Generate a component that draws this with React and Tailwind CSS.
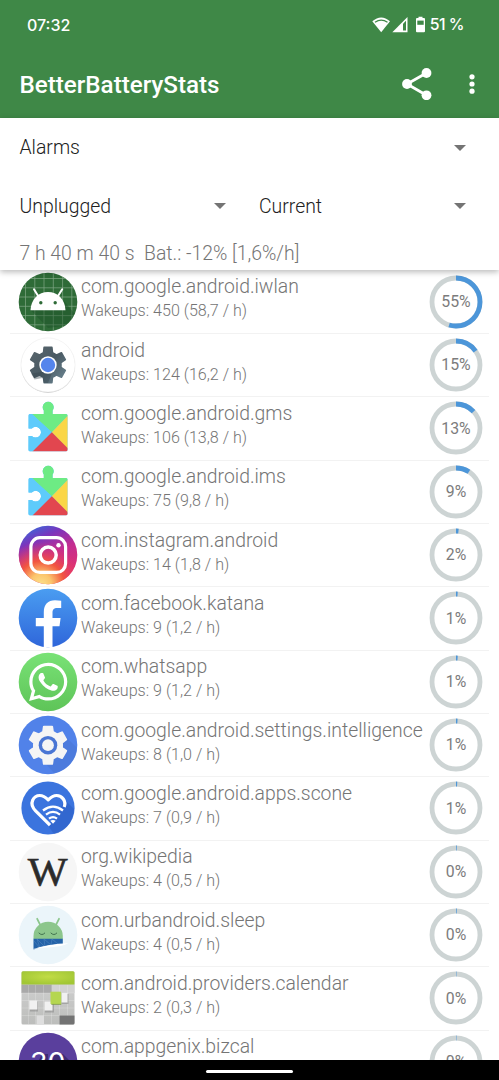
import { FaWhatsapp } from 'react-icons/fa6'

function gearPath(cx, cy, outer, inner, tipAngle, rootAngle) {
  const pts = []
  for (let i = 0; i < 6; i++) {
    const mid = i * 60 - 90
    const steps = [[-rootAngle, inner], [-tipAngle, outer], [tipAngle, outer], [rootAngle, inner]]
    for (const [off, r] of steps) {
      const a = ((mid + off) * Math.PI) / 180
      pts.push(`${(cx + r * Math.cos(a)).toFixed(2)} ${(cy + r * Math.sin(a)).toFixed(2)}`)
    }
  }
  return `M${pts.join('L')}Z`
}

function AndroidIcon() {
  const lines = [7.5, 16.8, 26, 35.3, 44.6, 53.8]
  return (
    <>
      <clipPath id="iwlan"><circle cx="30" cy="30" r="29.3" /></clipPath>
      <g clipPath="url(#iwlan)">
        <rect width="60" height="60" fill="#2e6b37" />
        <path d={lines.map((v) => `M${v} 0V60M0 ${v - 1}H60`).join('')} stroke="#82a987" strokeWidth=".7" />
        <path d="M12.7 38.3 30 56 60 52V46L46 29Z" fill="#1d5128" opacity=".45" />
      </g>
      <path d="m16 17.3 4 6.5M44.2 17.3l-4 6.5" stroke="#fff" strokeWidth="2" strokeLinecap="round" />
      <path d="M12.5 38.2C13 27 20.5 20 30 20s17 7 17.5 18.2Z" fill="#fff" />
      <circle cx="22.8" cy="30.8" r="1.7" fill="#2e6b37" />
      <circle cx="37.2" cy="30.8" r="1.7" fill="#2e6b37" />
    </>
  )
}

function SystemIcon() {
  return (
    <>
      <linearGradient id="sysgear" x1="0" y1="0" x2="1" y2="1">
        <stop offset="0" stopColor="#59666d" />
        <stop offset=".5" stopColor="#4a5a63" />
        <stop offset="1" stopColor="#6d8794" />
      </linearGradient>
      <circle cx="30" cy="30.9" r="27" fill="#c9c9c9" />
      <circle cx="30" cy="30" r="27.1" fill="#fff" stroke="#ececec" strokeWidth=".6" />
      <path d={gearPath(30, 30, 18.2, 13.2, 12.5, 20)} fill="url(#sysgear)" stroke="url(#sysgear)" strokeWidth="1.5" strokeLinejoin="round" />
      <path d="m24 37 10 1-4 10h-4l-1.500-5-8 1.500-3.500-6Z" fill="#34434b" opacity=".4" />
      <circle cx="30" cy="30" r="8.7" fill="#fff" />
      <circle cx="30" cy="30" r="7.2" fill="#5585ec" />
    </>
  )
}

function PlayServicesIcon({ id }) {
  const clip = `puzzle-${id}`
  return (
    <>
      <clipPath id={clip}>
        <path d="M12 15.9H25.8V12.5A5.5 5.5 0 1 1 34.6 12.5V15.9H48A1.5 1.5 0 0 1 49.5 17.4V51.7A1.5 1.5 0 0 1 48 53.2H12A1.5 1.5 0 0 1 10.5 51.7V38H13.8A5.4 5.4 0 1 0 13.8 30.4H10.5V17.4A1.5 1.5 0 0 1 12 15.9Z" />
      </clipPath>
      <g clipPath={`url(#${clip})`}>
        <rect width="60" height="60" fill="#5ecbfb" />
        <path d="M10.5 15.9V0H50V17.5L33.8 34.2 14 15.9Z" fill="#6deb84" />
        <path d="M10.5 13 33.8 34.2 14 54H10Z" fill="#5ecbfb" />
        <path d="M50 17.5V51L33.8 34.2Z" fill="#fad646" />
        <path d="M14.5 53.5 33.8 34.2 50 50.5V54H14Z" fill="#e2464f" />
      </g>
    </>
  )
}

function InstagramIcon() {
  return (
    <>
      <linearGradient id="igbase" x1=".25" y1="0" x2=".7" y2="1">
        <stop offset="0" stopColor="#3b66d8" />
        <stop offset=".22" stopColor="#7a35bd" />
        <stop offset=".5" stopColor="#c22d92" />
        <stop offset="1" stopColor="#e8336a" />
      </linearGradient>
      <radialGradient id="igwarm" cx=".38" cy="1" r=".72">
        <stop offset="0" stopColor="#fde08a" />
        <stop offset=".25" stopColor="#fbc56c" />
        <stop offset=".55" stopColor="#f2563f" />
        <stop offset="1" stopColor="#e0306e" stopOpacity="0" />
      </radialGradient>
      <circle cx="30" cy="30" r="29.3" fill="url(#igbase)" />
      <circle cx="30" cy="30" r="29.3" fill="url(#igwarm)" />
      <rect x="12.9" y="12.7" width="34.7" height="34.7" rx="9" fill="none" stroke="#fff" strokeWidth="3.2" />
      <circle cx="30.2" cy="30.1" r="8" fill="none" stroke="#fff" strokeWidth="3.5" />
      <circle cx="40.5" cy="20.2" r="2.2" fill="#fff" />
    </>
  )
}

function FacebookIcon() {
  return (
    <>
      <linearGradient id="fb" x1="0" y1="0" x2="0" y2="1">
        <stop offset="0" stopColor="#4a9df1" />
        <stop offset="1" stopColor="#2f66da" />
      </linearGradient>
      <circle cx="30" cy="30" r="29.3" fill="url(#fb)" />
      <path d="M25.8 59V38.2H17.8V29.9H25.8V24C25.8 16.5 30 12.3 37 12.3Q40 12.3 43.2 12.8V19.9H39.4C35.6 19.9 34.5 22 34.5 24.5V29.9H42.6L41.5 38.2H34.5V59Q30 59.6 25.8 59Z" fill="#fff" />
    </>
  )
}

function WhatsappIcon() {
  return (
    <>
      <linearGradient id="wa" x1="0" y1="0" x2="0" y2="1">
        <stop offset="0" stopColor="#79e276" />
        <stop offset="1" stopColor="#5ec458" />
      </linearGradient>
      <circle cx="30" cy="30" r="29.3" fill="url(#wa)" />
      <FaWhatsapp x="8.4" y="8" size="43.6" color="#fff" />
    </>
  )
}

function SettingsIcon() {
  return (
    <>
      <circle cx="30" cy="30" r="29.3" fill="#5182e9" />
      <path d="m46 20 13 13c0 6-3 12-7 16s-9 8-16 9L27 48Z" fill="#4a76d6" opacity=".6" />
      <path d={gearPath(30, 30.2, 19, 14.2, 12.5, 20)} fill="#f5f5f5" stroke="#f5f5f5" strokeWidth="2" strokeLinejoin="round" />
      <circle cx="30" cy="30.2" r="9.3" fill="#4a76d4" />
      <circle cx="30" cy="30.2" r="5.9" fill="#f5f5f5" />
    </>
  )
}

function SconeIcon() {
  return (
    <>
      <circle cx="30" cy="30" r="26.6" fill="#3b74de" />
      <path d="M47 22 56 31C55 44 47 54 36 56L31 49Z" fill="#2d5fc4" opacity=".6" />
      <g fill="none" stroke="#fff" strokeWidth="3.2">
        <path d="M32 47.2 17.6 32.8C10 25 16 17.5 21.8 17.5 25.5 17.5 28 19.6 30.2 21.8 32.4 19.6 35 17.5 38.6 17.5 44 17.5 48.500 23 46.2 29" strokeLinejoin="round" />
        <path d="M25 32.5Q35 24.8 45 32.5M28 36.6Q35 31.2 42 36.6M31 40.6Q35 37.7 39 40.6" strokeWidth="2.3" />
      </g>
      <path d="m32.3 42.8 2.7 3 2.7-3q-2.7-1.800-5.400 0Z" fill="#fff" />
    </>
  )
}

function WikipediaIcon() {
  return (
    <>
      <circle cx="30" cy="30" r="29.3" fill="#f6f6f6" />
      <text x="9.8" y="42.8" textLength="39.8" lengthAdjust="spacingAndGlyphs" fill="#2b2b2b" stroke="#2b2b2b" strokeWidth=".6" className="font-['Liberation_Serif',serif] text-[39px]">W</text>
    </>
  )
}

function SleepIcon() {
  return (
    <>
      <circle cx="30" cy="30" r="29.3" fill="#ebf5fa" />
      <path d="m19.2 13.8 3 6M41 13.8l-3 6" stroke="#8cc68c" strokeWidth="1.8" strokeLinecap="round" />
      <path d="M15.5 34V31a14.65 14.2 0 0 1 29.3 0V34Z" fill="#8cc68c" />
      <path d="M15.5 33.7H44.8V39.5Q29 39.5 15.5 44.5Z" fill="#2563a8" />
      <path d="m16 36 6 7-3-9 8 8-1-8 7 6 1-6 6 5" fill="none" stroke="#477fbb" strokeWidth=".7" />
      <path d="M11 45.2Q30 38.5 50.5 38.2 43 42 29 42.5 18 43 11 45.2Z" fill="#fff" />
      <path d="M20.7 27.8q3.2 3.4 6.3 0M32.7 27.8q3.2 3.4 6.3 0" fill="none" stroke="#3f6f4d" strokeWidth="1" />
    </>
  )
}

function CalendarIcon() {
  return (
    <>
      <linearGradient id="calgrey" x1="0" y1="0" x2="0" y2="1">
        <stop offset="0" stopColor="#d4d4d4" />
        <stop offset="1" stopColor="#bcbdbb" />
      </linearGradient>
      <radialGradient id="calgreen" cx=".5" cy=".4" r=".6">
        <stop offset="0" stopColor="#c1dc46" />
        <stop offset="1" stopColor="#a2c735" />
      </radialGradient>
      <rect x="3.5" y="3.3" width="53" height="53.3" rx="1.5" fill="url(#calgrey)" />
      <path d="M3.5 16.6H34V25H3.5Z" fill="#a9a9a9" />
      <path d="M34 16.6H56.5V25H34Z" fill="#d2d2d2" />
      <path d="M10.5 17V56M17.5 17V56M25.5 17V56M33.5 17V56M41.5 17V56M49.5 17V56M3.5 25H56.5M3.5 32.5H56.5M3.5 40H56.5M3.5 47.5H56.5" stroke="#fff" strokeOpacity=".28" strokeWidth=".7" />
      <path d="M18.5 47.5h7.5v9h-7.5Z" fill="#dedede" />
      <path d="M41.5 47.5h15v7.5q0 1.5-1.5 1.5H41.5Z" fill="#737373" />
      <path d="M12 33.5h8v10h-8ZM27 34.5h9v10h-9ZM44 26h6.5v10H44Z" fill="#888" opacity=".55" />
      <path d="M11.3 32.5h8v9h-8ZM26.5 33.5h8v9h-8ZM43 25h6.5v9.5H43Z" fill="#f1f1f1" />
      <rect x="33.3" y="24.7" width="10" height="12" fill="#7d9b3c" />
      <rect x="32.5" y="23.7" width="10.5" height="12.2" fill="#b5d650" />
      <path d="M3.5 16.6V4.8q0-1.5 1.5-1.5H55q1.5 0 1.5 1.5V16.6Z" fill="url(#calgreen)" />
    </>
  )
}

function BizcalIcon() {
  return (
    <>
      <circle cx="30" cy="30" r="29.3" fill="#5a3f9d" />
      <path d="M24 22h6v8H20ZM36 22h9l10 10H34Z" fill="#3d2a75" />
      <text x="12" y="40.5" textLength="35.5" lengthAdjust="spacingAndGlyphs" fill="#fff" className="font-['Inter',sans-serif] text-[29px]">30</text>
    </>
  )
}

const apps = [
  { name: 'com.google.android.iwlan', info: '450 (58,7 / h)', pct: 55, arc: 54.7, icon: <AndroidIcon /> },
  { name: 'android', info: '124 (16,2 / h)', pct: 15, arc: 15.1, icon: <SystemIcon /> },
  { name: 'com.google.android.gms', info: '106 (13,8 / h)', pct: 13, arc: 13, icon: <PlayServicesIcon id="gms" /> },
  { name: 'com.google.android.ims', info: '75 (9,8 / h)', pct: 9, arc: 9.1, icon: <PlayServicesIcon id="ims" /> },
  { name: 'com.instagram.android', info: '14 (1,8 / h)', pct: 2, arc: 1.7, icon: <InstagramIcon /> },
  { name: 'com.facebook.katana', info: '9 (1,2 / h)', pct: 1, arc: 1.1, icon: <FacebookIcon /> },
  { name: 'com.whatsapp', info: '9 (1,2 / h)', pct: 1, arc: 1.1, icon: <WhatsappIcon /> },
  { name: 'com.google.android.settings.intelligence', info: '8 (1,0 / h)', pct: 1, arc: 1, icon: <SettingsIcon /> },
  { name: 'com.google.android.apps.scone', info: '7 (0,9 / h)', pct: 1, arc: 0.8, icon: <SconeIcon /> },
  { name: 'org.wikipedia', info: '4 (0,5 / h)', pct: 0, arc: 0.5, icon: <WikipediaIcon /> },
  { name: 'com.urbandroid.sleep', info: '4 (0,5 / h)', pct: 0, arc: 0.5, icon: <SleepIcon /> },
  { name: 'com.android.providers.calendar', info: '2 (0,3 / h)', pct: 0, arc: 0.3, icon: <CalendarIcon /> },
  { name: 'com.appgenix.bizcal', pct: 0, arc: 0.3, icon: <BizcalIcon /> },
]

function Ring({ pct, arc }) {
  return (
    <div className="relative w-[54px] h-[54px] shrink-0 flex items-center justify-center">
      <svg viewBox="0 0 54 54" className="absolute inset-0" fill="none" strokeWidth="4.8">
        <circle cx="27" cy="27" r="24" stroke="#cdd4d4" />
        <circle cx="27" cy="27" r="24" stroke="#4c96d9" pathLength="100" strokeDasharray={`${arc} 100`} transform="rotate(-90 27 27)" />
      </svg>
      <span className="relative text-[15.8px] leading-none text-[#7c7c7c]">{pct}%</span>
    </div>
  )
}

function AppRow({ name, info, pct, arc, icon }) {
  return (
    <li className="h-[63.33px] shrink-0 flex items-start border-b border-[#f2f2f2] pl-[8px] pr-[6px]">
      <svg viewBox="0 0 60 60" className="w-[60px] h-[60px] mt-[1px] shrink-0">{icon}</svg>
      <div className="flex-1 min-w-0 pl-[3px] pt-[4.5px] font-light whitespace-nowrap text-[#757575]">
        <div className="text-[19.36px] leading-[24px]">{name}</div>
        {info && <div className="text-[16.1px] leading-[24px]">Wakeups: {info}</div>}
      </div>
      <div className="mt-[4px]">
        <Ring pct={pct} arc={arc} />
      </div>
    </li>
  )
}

function Spinner({ label, className = '' }) {
  return (
    <div className={`h-[58.5px] flex items-center justify-between ${className}`}>
      <span>{label}</span>
      <svg viewBox="0 0 12 6" className="w-[12px] h-[6px]"><path d="M0 0H12L6 6Z" fill="#747474" /></svg>
    </div>
  )
}

function StatusBar() {
  return (
    <div className="h-[50px] flex items-center justify-between pl-[27px] pr-[35px] font-['Inter',sans-serif] text-[16px] font-medium">
      <span>07:32</span>
      <div className="flex items-center">
        <svg viewBox="0 0 58 18" className="w-[58px] h-[18px]" fill="#fff">
          <path d="M.3 5.3Q9.2-2.300 18 5.3L9.2 16.2Z" />
          <path d="M3 6.3Q9.2 1.8 15.5 6.3" stroke="#3f8847" strokeWidth="1.3" fill="none" />
          <path d="M35.5 1V16.2H20.3Z" />
          <path d="M31 7.800 34 4.8V14.6H31Z" fill="#3f8847" />
          <path d="M46.5.8h4V2h1.5q1 0 1 1V15.2q0 1-1 1h-7q-1 0-1-1V3q0-1 1-1h1.5Z" />
          <path d="M45.3 4.6h6.4v4.2h-6.400Z" fill="#3f8847" />
        </svg>
        <span className="text-[15.8px] tracking-[-0.5px]">51 %</span>
      </div>
    </div>
  )
}

export default function App() {
  return (
    <div className="w-[499px] h-[1080px] overflow-hidden flex flex-col bg-white font-['Roboto',sans-serif]">
      <header className="h-[118px] shrink-0 bg-[#3f8847] text-white">
        <StatusBar />
        <div className="h-[68px] flex items-center pl-[19.5px] pr-[24px]">
          <h1 className="flex-1 pt-[2px] text-[24.2px] leading-none font-medium">BetterBatteryStats</h1>
          <svg viewBox="0 0 30 32" className="w-[30px] h-[32px]" fill="#fff">
            <path d="M24.5 5 5 16l19.5 11.3" stroke="#fff" strokeWidth="2.8" fill="none" />
            <circle cx="24.5" cy="5" r="4.9" />
            <circle cx="5" cy="16" r="4.9" />
            <circle cx="24.5" cy="27.3" r="4.9" />
          </svg>
          <svg viewBox="0 0 6 20" className="w-[6px] h-[20px] ml-[37px]" fill="#fff">
            <circle cx="3" cy="2.8" r="2.6" />
            <circle cx="3" cy="10" r="2.6" />
            <circle cx="3" cy="17.2" r="2.6" />
          </svg>
        </div>
      </header>

      <section className="relative z-10 h-[152px] shrink-0 bg-white pt-[0.7px] font-light text-[19.4px] text-[#212121] shadow-[0_2px_6px_rgba(0,0,0,0.28)]">
        <Spinner label="Alarms" className="pl-[19.5px] pr-[33px]" />
        <div className="flex">
          <Spinner label="Unplugged" className="w-[240px] pl-[19.5px] pr-[14px]" />
          <Spinner label="Current" className="flex-1 pl-[19px] pr-[33px]" />
        </div>
        <p className="pl-[19.5px] pt-[4px] leading-[28px] text-[#757575] whitespace-pre">7 h 40 m 40 s  Bat.: -12% [1,6%/h]</p>
      </section>

      <ul className="flex-1 min-h-0 overflow-hidden flex flex-col mx-[10px] pt-[0.8px]">
        {apps.map((app) => <AppRow key={app.name} {...app} />)}
      </ul>

      <nav className="relative z-10 h-[20px] shrink-0 bg-black flex justify-center pt-[10px]">
        <div className="w-[87px] h-[3px] rounded-full bg-white" />
      </nav>
    </div>
  )
}
